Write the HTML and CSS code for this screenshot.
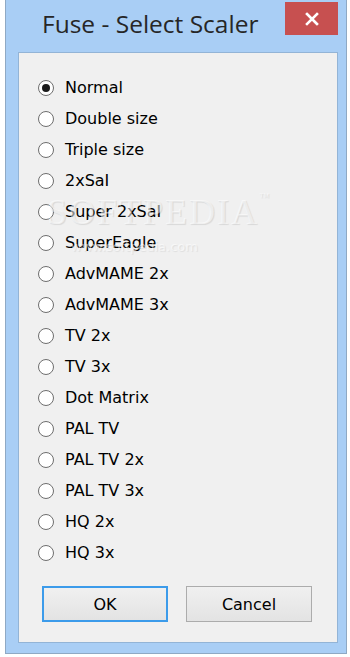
FILE: index.html
```html
<!DOCTYPE html>
<html lang="en">
<head>
    <meta charset="UTF-8">
    <title>Fuse - Select Scaler</title>
    <link rel="stylesheet" href="styles.css">
</head>
<body>
<div class="window">
    <div class="titlebar">
        <span class="title">Fuse - Select Scaler</span>
        <div class="close">
            <svg width="14" height="14" viewBox="0 0 14 14"><path d="M2 2L12 12M12 2L2 12" stroke="#fff" stroke-width="2.6" stroke-linecap="square"/></svg>
        </div>
    </div>
    <div class="client">
        <ul class="options">
            <li class="checked"><span class="radio"></span>Normal</li>
            <li><span class="radio"></span>Double size</li>
            <li><span class="radio"></span>Triple size</li>
            <li><span class="radio"></span>2xSaI</li>
            <li><span class="radio"></span>Super 2xSaI</li>
            <li><span class="radio"></span>SuperEagle</li>
            <li><span class="radio"></span>AdvMAME 2x</li>
            <li><span class="radio"></span>AdvMAME 3x</li>
            <li><span class="radio"></span>TV 2x</li>
            <li><span class="radio"></span>TV 3x</li>
            <li><span class="radio"></span>Dot Matrix</li>
            <li><span class="radio"></span>PAL TV</li>
            <li><span class="radio"></span>PAL TV 2x</li>
            <li><span class="radio"></span>PAL TV 3x</li>
            <li><span class="radio"></span>HQ 2x</li>
            <li><span class="radio"></span>HQ 3x</li>
        </ul>
        <div class="buttons">
            <button class="btn default">OK</button>
            <button class="btn">Cancel</button>
        </div>
        <div class="mark">SOFTPEDIA<sup>™</sup></div>
        <div class="mark-url">www.softpedia.com</div>
    </div>
</div>
</body>
</html>
```

FILE: styles.css
```css
body,div,ul,li{margin:0;padding:0;}
ul{list-style-type:none;}
body{background:#fff;font-family:"DejaVu Sans",sans-serif;}

.window{width:340px;height:653px;margin-left:5px;background:#a9cef5;border:1px solid #8fa9c4;border-top:none;display:flex;flex-direction:column;}
.titlebar{height:52px;display:flex;align-items:flex-start;position:relative;}
.title{font-family:"Open Sans",sans-serif;font-size:24.5px;color:#262626;margin:8px 0 0 36px;line-height:32px;}
.close{position:absolute;right:8px;top:2px;width:53px;height:33px;background:#c75050;display:flex;align-items:center;justify-content:center;}

.client{position:relative;margin:0 8px 0 12px;height:589px;background:#f0f0f0;border:1px solid #93b4d6;}
.options{padding:19px 0 0 19px;display:flex;flex-direction:column;}
.options li{height:31px;display:flex;align-items:center;font-size:16px;color:#000;}
.radio{flex:0 0 16px;box-sizing:border-box;width:16px;height:16px;border:1.5px solid #6e6e6e;border-radius:50%;background:#fff;margin-right:11px;display:flex;align-items:center;justify-content:center;}
.checked .radio:after{content:"";width:8px;height:8px;border-radius:50%;background:#1a1a1a;}

.buttons{display:flex;gap:18px;margin:18px 0 0 23px;}
.btn{width:126px;height:36px;font-family:"DejaVu Sans",sans-serif;font-size:16px;color:#000;background:linear-gradient(#f0f0f0,#e3e3e3);border:1px solid #acacac;border-radius:0;padding:0;}
.btn.default{border:2px solid #3c9bea;}

.mark{position:absolute;left:28px;top:138px;font-family:"Liberation Serif",serif;font-size:36px;letter-spacing:2px;color:rgba(255,255,255,0.55);text-shadow:1px 1px 1px rgba(0,0,0,0.1);}
.mark sup{font-size:10px;vertical-align:top;}
.mark-url{position:absolute;left:52px;top:186px;font-size:13px;color:rgba(255,255,255,0.55);text-shadow:1px 1px 1px rgba(0,0,0,0.08);}
```
